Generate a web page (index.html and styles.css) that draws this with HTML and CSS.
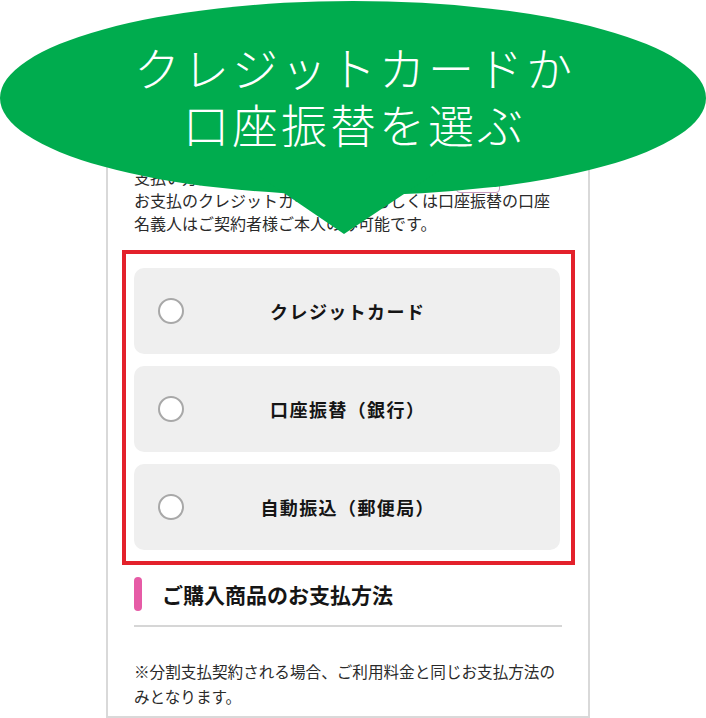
FILE: index.html
```html
<!DOCTYPE html>
<html lang="ja">
<head>
<meta charset="utf-8">
<title>お支払方法</title>
<link rel="stylesheet" href="styles.css">
</head>
<body>
<div class="frame">
  <div class="intro">
    <div class="intro-first"><span class="intro-lead">支払い方法を選択してください。</span><span class="intro-box"></span></div>
    <div>お支払のクレジットカード名義人もしくは口座振替の口座<br>名義人はご契約者様ご本人のみ可能です。</div>
  </div>
  <div class="choices">
    <div class="card"><span class="radio"></span><span class="label">クレジットカード</span></div>
    <div class="card"><span class="radio"></span><span class="label">口座振替（銀行）</span></div>
    <div class="card"><span class="radio"></span><span class="label">自動振込（郵便局）</span></div>
  </div>
  <div class="heading"><span class="heading-bar"></span><span class="heading-text">ご購入商品のお支払方法</span></div>
  <div class="divider"></div>
  <p class="note">※分割支払契約される場合、ご利用料金と同じお支払方法の<br>みとなります。</p>
</div>
<div class="bubble">
  <svg class="bubble-shape" width="706" height="240" viewBox="0 0 706 240">
    <ellipse cx="353" cy="98" rx="353" ry="97" fill="#00ac4e"/>
    <polygon points="250,170 440,170 344,234" fill="#00ac4e"/>
  </svg>
  <div class="bubble-text">
    <div class="bubble-line">クレジットカードか</div>
    <div class="bubble-line">口座振替を選ぶ</div>
  </div>
</div>
</body>
</html>
```
FILE: styles.css
```css
* { box-sizing: border-box; }
html, body { margin: 0; padding: 0; }
body {
  width: 706px;
  height: 718px;
  overflow: hidden;
  position: relative;
  background: #ffffff;
  font-family: "Noto Sans CJK JP", "Noto Sans", sans-serif;
  color: #222;
}
.frame {
  margin: 50px 0 0 106px;
  width: 484px;
  height: 668px;
  border: 2px solid #d9d9d9;
  border-top: 0;
  padding: 116px 26px 0 26px;
}
.intro {
  font-size: 16px;
  line-height: 23px;
  color: #2a2a2a;
}
.intro-first {
  display: flex;
  height: 23px;
  align-items: flex-start;
}
.intro-lead { width: 322px; white-space: nowrap; overflow: hidden; }
.intro-box {
  width: 44px;
  height: 25px;
  margin-top: 2px;
  border: 1px solid #c99abf;
  border-radius: 4px;
  background: #fff;
}
.choices {
  margin: 15px -13px 0 -12px;
  border: 4px solid #e3212b;
  padding: 14px 11px 11px 8px;
  display: flex;
  flex-direction: column;
  gap: 12px;
}
.card {
  height: 86px;
  border-radius: 10px;
  background: #efefef;
  display: grid;
  grid-template-columns: 1fr auto 1fr;
  align-items: center;
}
.radio {
  justify-self: start;
  margin-left: 24px;
  width: 26px;
  height: 26px;
  border-radius: 50%;
  border: 2px solid #a8a8a8;
  background: #ffffff;
}
.label {
  font-size: 18px;
  font-weight: 700;
  letter-spacing: 1.4px;
  padding-left: 1.4px;
  color: #151515;
}
.heading {
  margin-top: 12px;
  display: flex;
  align-items: center;
  gap: 20px;
}
.heading-bar {
  width: 8px;
  height: 34px;
  border-radius: 4px;
  background: #e65ba6;
}
.heading-text {
  font-size: 21px;
  font-weight: 700;
  color: #151515;
  line-height: 34px;
}
.divider {
  margin-top: 14px;
  height: 2px;
  background: #d6d6d6;
}
.note {
  margin: 32px 0 0 0;
  font-size: 15.6px;
  line-height: 25px;
  color: #2a2a2a;
  white-space: nowrap;
}
.bubble {
  position: absolute;
  left: 0;
  top: 0;
  width: 706px;
  height: 240px;
}
.bubble-shape {
  position: absolute;
  left: 0;
  top: 0;
}
.bubble-text {
  position: relative;
  padding-top: 38px;
  text-align: center;
  color: #ffffff;
  font-size: 46px;
  font-weight: 300;
  letter-spacing: 3px;
  padding-left: 3px;
  white-space: nowrap;
}
.bubble-line {
  height: 57px;
  line-height: 57px;
}
```
